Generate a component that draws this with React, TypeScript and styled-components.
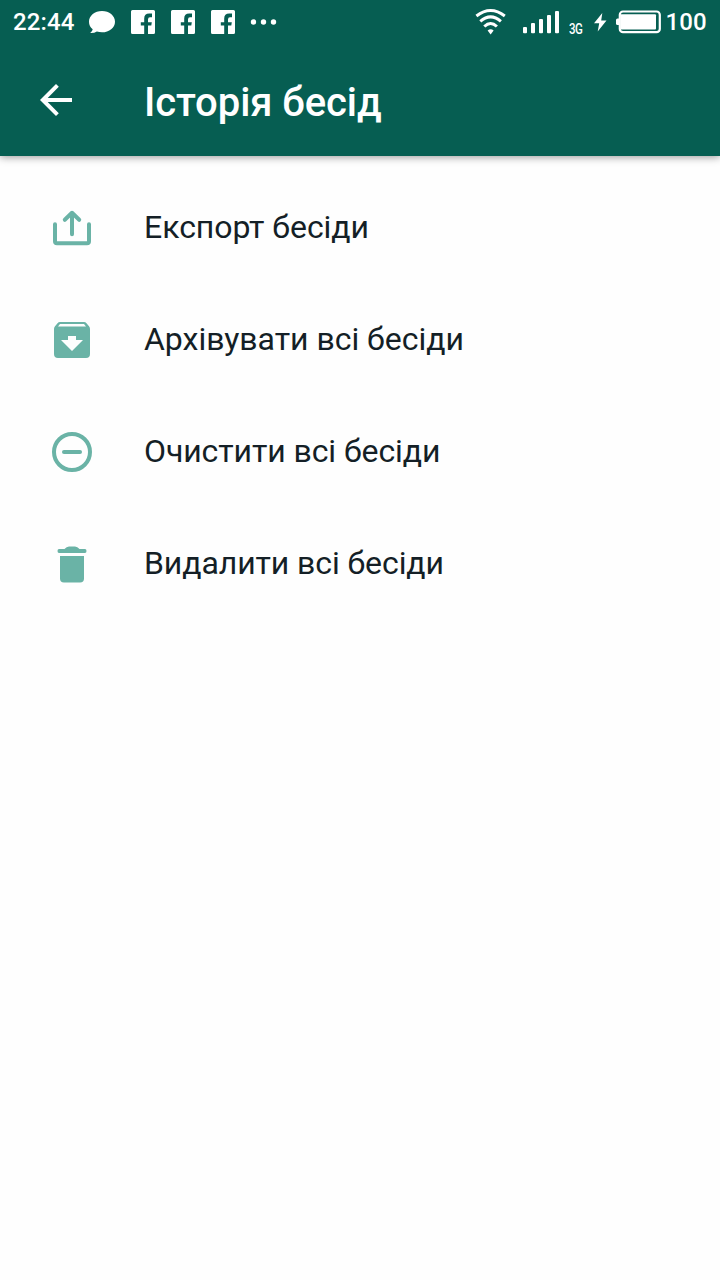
import React from "react";
import styled, { createGlobalStyle } from "styled-components";

const GlobalStyle = createGlobalStyle`
  * { box-sizing: border-box; }
  body {
    margin: 0;
    background: #fefefe;
    font-family: Roboto, "Noto Sans", sans-serif;
  }
`;

const Screen = styled.div`
  width: 720px;
  height: 1280px;
  display: flex;
  flex-direction: column;
  background: #fefefe;
  overflow: hidden;
`;

const Header = styled.header`
  height: 156px;
  flex: none;
  background: #065e52;
  color: #fff;
  box-shadow: 0 1px 8px rgba(0, 0, 0, 0.42);
`;

const StatusBar = styled.div`
  height: 44px;
  padding: 0 13px;
  display: flex;
  justify-content: space-between;
`;

const StatusGroup = styled.div`
  display: flex;
  align-items: flex-start;
`;

const StatusText = styled.span<{ $width: number; $indent?: number }>`
  width: ${(p) => p.$width}px;
  text-indent: ${(p) => p.$indent ?? 0}px;
  font-size: 24px;
  font-weight: 500;
  line-height: 44px;
  letter-spacing: 0.15px;
  white-space: nowrap;
`;

const Glyph = styled.svg<{ $gap?: number }>`
  display: block;
  flex: none;
  margin-left: ${(p) => p.$gap ?? 0}px;
  fill: #fff;
`;

const NetworkLabel = styled.span`
  width: 14px;
  margin: 21px 0 0 10px;
  font-size: 14px;
  font-weight: 500;
  line-height: 16px;
  letter-spacing: -0.6px;
  white-space: nowrap;
  transform: scaleX(0.82);
  transform-origin: left center;
`;

const Toolbar = styled.div`
  height: 112px;
  padding-left: 32px;
  display: flex;
  align-items: center;
`;

const BackButton = styled.button`
  width: 48px;
  height: 48px;
  padding: 0;
  border: 0;
  background: none;
  color: inherit;
`;

const Title = styled.h1`
  margin: 5px 0 0 64px;
  font-size: 40px;
  font-weight: 500;
  line-height: 48px;
  letter-spacing: -0.08px;
  white-space: nowrap;
`;

const List = styled.ul`
  list-style: none;
  margin: 0;
  padding: 16px 0 0;
`;

const Row = styled.li`
  height: 112px;
  padding-left: 48px;
  display: flex;
  align-items: center;
`;

const RowIcon = styled.svg`
  width: 48px;
  height: 48px;
  flex: none;
  color: #6ab3a6;
`;

const RowLabel = styled.span<{ $spacing: number }>`
  margin: -2px 0 0 48px;
  font-size: 32px;
  line-height: 40px;
  letter-spacing: ${(p) => p.$spacing}px;
  color: #141f26;
  white-space: nowrap;
`;

const FacebookGlyph = ({ gap }: { gap: number }) => (
  <Glyph $gap={gap} width="24" height="44" viewBox="0 0 24 44">
    <path d="M1.5 10H22.5Q24 10 24 11.5V32.5Q24 34 22.5 34H17V25.5H20.3L20.8 22.3H17V19.5Q17 17.2 19 17.2H21V13.5H18.2Q13.2 13.5 13.2 18.5V22.3H9.8V25.5H13.2V34H1.5Q0 34 0 32.5V11.5Q0 10 1.5 10Z" />
  </Glyph>
);

const ExportIcon = () => (
  <RowIcon viewBox="0 0 48 48" fill="none" stroke="currentColor" strokeWidth="4" strokeLinecap="round">
    <path d="M7 20V37Q7 39 9 39H39Q41 39 41 37V20" transform="translate(0 .2)" strokeLinejoin="round" />
    <path d="M24 29.5V8M16.8 15L24 8L31.2 15" strokeLinejoin="round" transform="translate(0 .8)" />
  </RowIcon>
);

const ArchiveIcon = () => (
  <RowIcon viewBox="0 0 48 48" fill="currentColor">
    <path fillRule="evenodd" d="M12 6H36Q37.5 6 38.5 7.2L41 10.2Q42 11.4 42 13V38Q42 42 38 42H10Q6 42 6 38V13Q6 11.4 7 10.2L9.5 7.2Q10.5 6 12 6ZM12 8L10 10.6H38L36 8ZM20 20V24H13L24 35L35 24H28V20Z" />
  </RowIcon>
);

const ClearIcon = () => (
  <RowIcon viewBox="0 0 48 48" fill="none" stroke="currentColor" strokeWidth="4" strokeLinecap="round">
    <circle cx="24" cy="24" r="18" />
    <path d="M16 24H32" />
  </RowIcon>
);

const DeleteIcon = () => (
  <RowIcon viewBox="0 0 48 48" fill="currentColor">
    <path d="M12 16H36V38.5Q36 42.5 32 42.5H16Q12 42.5 12 38.5Z" />
    <path d="M11 9H16.5Q18.5 6.5 21 6.5H27Q29.5 6.5 31.5 9H37Q38.5 9 38.5 11T37 13H11Q9.5 13 9.5 11T11 9Z" />
  </RowIcon>
);

const actions = [
  { label: "Експорт бесіди", Icon: ExportIcon, spacing: -0.05 },
  { label: "Архівувати всі бесіди", Icon: ArchiveIcon, spacing: -0.03 },
  { label: "Очистити всі бесіди", Icon: ClearIcon, spacing: -0.09 },
  { label: "Видалити всі бесіди", Icon: DeleteIcon, spacing: -0.09 },
];

export default function App() {
  return (
    <Screen>
      <GlobalStyle />
      <Header>
        <StatusBar>
          <StatusGroup>
            <StatusText $width={62}>22:44</StatusText>
            <Glyph $gap={14} width="26" height="44" viewBox="0 0 26 44">
              <path d="M13 11C20.2 11 26 15.7 26 21.7S20.2 32.3 13 32.3Q10.3 32.3 7.9 31.5Q5.2 33.2 1.2 33Q3.6 31 3.7 29.2Q0 26.2 0 21.7C0 15.7 5.8 11 13 11Z" />
            </Glyph>
            <FacebookGlyph gap={16} />
            <FacebookGlyph gap={16} />
            <FacebookGlyph gap={16} />
            <Glyph $gap={15} width="28" height="44" viewBox="0 0 28 44">
              <circle cx="3.5" cy="22" r="2.7" />
              <circle cx="13.5" cy="22" r="2.7" />
              <circle cx="23.5" cy="22" r="2.7" />
            </Glyph>
          </StatusGroup>
          <StatusGroup>
            <Glyph width="32" height="44" viewBox="0 0 32 44">
              <g fill="none" stroke="#fff" strokeWidth="3">
                <path d="M1.4 16Q15.6 5 29.8 16" />
                <path d="M5.3 21.3Q15.6 12.4 25.9 21.3" />
                <path d="M9.3 26.5Q15.6 20.5 21.9 26.5" />
              </g>
              <path d="M12.6 30.4Q15.6 28 18.6 30.4L15.6 34.5Z" />
            </Glyph>
            <Glyph $gap={16} width="36" height="44" viewBox="0 0 36 44">
              <rect x="0" y="27" width="4" height="6.2" rx="1" />
              <rect x="8" y="23" width="4" height="10.2" rx="1" />
              <rect x="16" y="19" width="4" height="14.2" rx="1" />
              <rect x="24" y="15" width="4" height="18.2" rx="1" />
              <rect x="32" y="11" width="4" height="22.2" rx="1" />
            </Glyph>
            <NetworkLabel>3G</NetworkLabel>
            <Glyph $gap={11} width="13" height="44" viewBox="0 0 13 44">
              <path d="M8.3 13L0 23.3H5.2L3.7 31.5L12.5 20.5H7.2Z" />
            </Glyph>
            <Glyph $gap={9} width="46" height="44" viewBox="0 0 46 44">
              <rect x="3.8" y="11.5" width="40" height="20.6" rx="3.2" fill="none" stroke="#fff" strokeWidth="2.2" />
              <rect x="4.4" y="14.2" width="35.6" height="15.2" rx="1" />
              <path d="M4 18.5H1.5Q0 18.5 0 20V23.5Q0 25 1.5 25H4Z" />
            </Glyph>
            <StatusText $width={45} $indent={3.5}>
              100
            </StatusText>
          </StatusGroup>
        </StatusBar>
        <Toolbar>
          <BackButton aria-label="Назад">
            <Glyph width="48" height="48" viewBox="0 0 48 48">
              <path d="M40 22H15.7L26.8 10.8L24 8L8 24L24 40L26.8 37.2L15.7 26H40Z" />
            </Glyph>
          </BackButton>
          <Title>Історія бесід</Title>
        </Toolbar>
      </Header>
      <List>
        {actions.map(({ label, Icon, spacing }) => (
          <Row key={label}>
            <Icon />
            <RowLabel $spacing={spacing}>{label}</RowLabel>
          </Row>
        ))}
      </List>
    </Screen>
  );
}
